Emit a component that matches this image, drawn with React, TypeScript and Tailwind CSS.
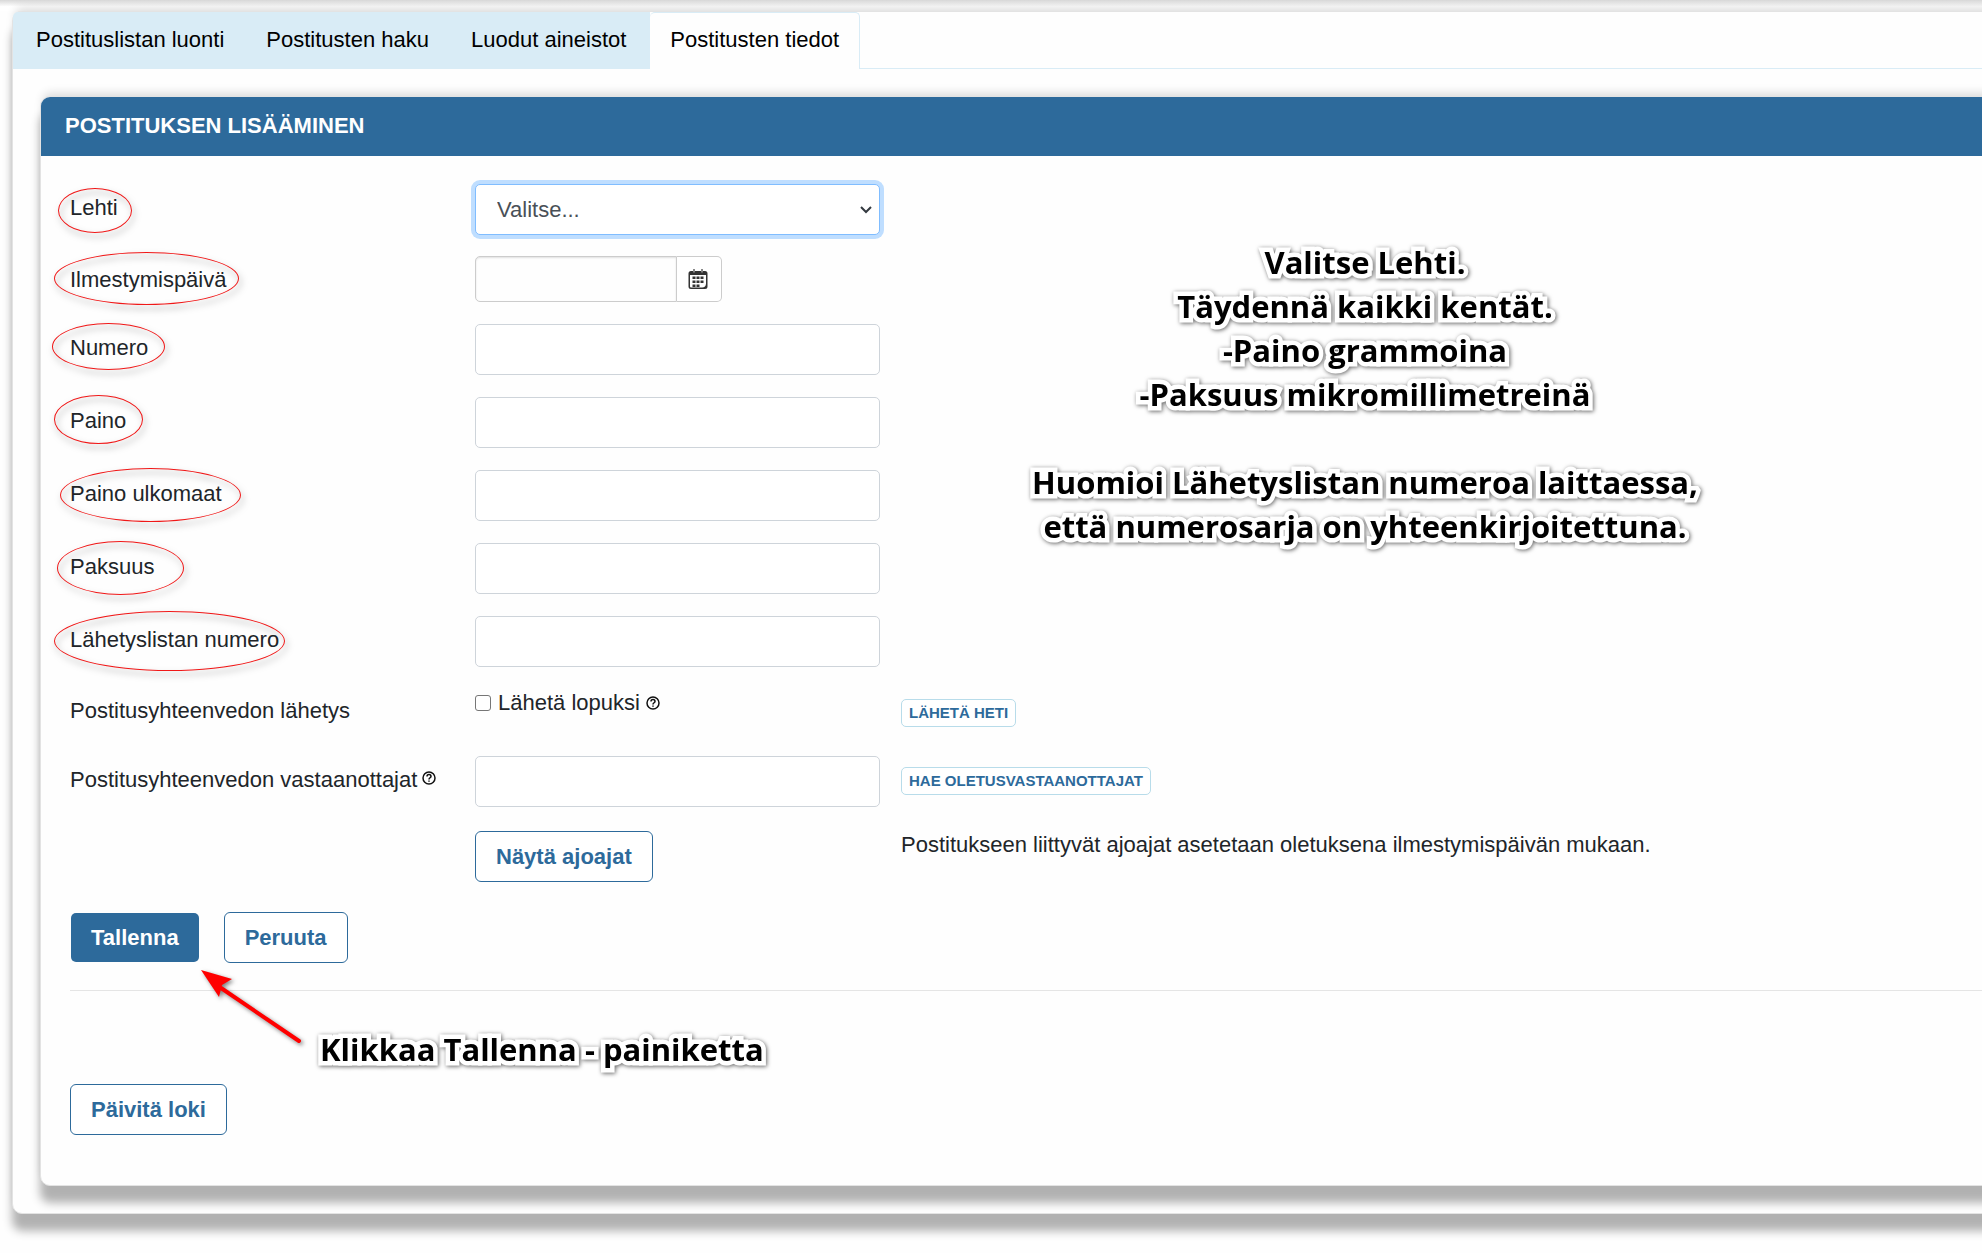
import React from "react";

const CARD_SHADOW =
  "border border-[#e3e3e3] rounded-[10px] shadow-[0_17px_10px_rgba(0,0,0,0.3),0_-6px_10px_-3px_rgba(0,0,0,0.14)]";

const FIELD =
  "h-[51px] w-full rounded-[5px] border border-[#ced4da] bg-white px-[21px] text-[#495057] outline-none";

const OUTLINE_BUTTON =
  "h-[51px] rounded-[6px] border border-[#2d6a9b] bg-white px-5 font-bold text-[#2d6a9b]";

const SMALL_BUTTON =
  "block h-7 rounded-[5px] border border-[#b8dcea] bg-white px-[7px] text-[15px] leading-5 font-bold text-[#2d6a9b]";

const CAPTION =
  "font-['Open_Sans',sans-serif] text-[31px] leading-[44px] font-bold text-black [paint-order:stroke_fill] [-webkit-text-stroke:9px_white] [filter:drop-shadow(1px_1px_2px_rgba(0,0,0,0.6))]";

function HelpIcon() {
  return (
    <svg viewBox="0 0 14 14" className="inline-block size-[14px] align-[2px]" fill="none" stroke="#111" strokeWidth="1.5" aria-hidden="true">
      <circle cx="7" cy="7" r="6" />
      <path d="M5 5.6C5 4.3 5.9 3.6 7 3.6s2 .7 2 1.8c0 1.2-2 1.5-2 3" />
      <path d="M7 9.4v1.4" />
    </svg>
  );
}

function CalendarIcon() {
  return (
    <svg viewBox="0 0 20 21" className="h-[21px] w-5" aria-hidden="true">
      <path d="M3 2h14a2.500 2.500 0 0 1 2.500 2.500V17.500A2.500 2.500 0 0 1 17 20H3A2.500 2.500 0 0 1 .5 17.500v-13A2.500 2.500 0 0 1 3 2Z" fill="#333" />
      <path d="M2 6h16v8.500c0 2.500-1.500 4-4 4H3a1 1 0 0 1-1-1Z" fill="#fff" />
      <path d="M5 0h2v3.500H5zM13 0h2v3.500h-2z" fill="#888" />
      <path d="M4.500 7.500h3v2.500h-3zM8.500 7.500h3v2.500h-3zM12.500 7.500h3v2.500h-3zM4.500 11.500h3V14h-3zM8.500 11.500h3V14h-3zM12.500 11.500h3V14h-3zM4.500 15.500h3V18h-3zM8.500 15.500h3V18h-3z" fill="#333" />
    </svg>
  );
}

type RowProps = {
  id: string;
  label: string;
  ring: string;
  height: string;
  children: React.ReactNode;
};

function Row({ id, label, ring, height, children }: RowProps) {
  return (
    <div className={`flex items-start ${height}`}>
      <div className="w-[405px] shrink-0 pt-2">
        <label htmlFor={id} className="relative inline-block leading-8">
          {label}
          <span
            aria-hidden="true"
            className={`pointer-events-none absolute rounded-[50%] border border-[#f01818] drop-shadow-[2px_4px_3px_rgba(0,0,0,0.5)] ${ring}`}
          />
        </label>
      </div>
      <div className="w-[405px] shrink-0">{children}</div>
    </div>
  );
}

const TEXT_ROWS = [
  { id: "numero", label: "Numero", ring: "-left-[18px] top-[-9px] h-[47px] w-[113px]" },
  { id: "paino", label: "Paino", ring: "-left-[16px] top-[-10px] h-[49px] w-[89px]" },
  { id: "ulkomaat", label: "Paino ulkomaat", ring: "-left-[10px] top-[-10px] h-[54px] w-[181px]" },
  { id: "paksuus", label: "Paksuus", ring: "-left-[13px] top-[-10px] h-[54px] w-[127px]" },
  { id: "lista", label: "Lähetyslistan numero", ring: "-left-[16px] top-[-13px] h-[60px] w-[231px]" },
];

export default function App() {
  return (
    <div className="min-h-screen overflow-hidden bg-[#fefefe] font-['Liberation_Sans',Arial,sans-serif] text-[22px] leading-8 text-[#212529]">
      <div className="h-[11px] bg-linear-to-b from-[#d8d8d8] to-white to-60%" />
      <main className={`-mr-6 ml-3 bg-[#fefefe] pb-[27px] ${CARD_SHADOW}`}>
        <nav className="flex h-[57px] border-b border-[#d9ecf6] text-black">
          <div className="flex rounded-tl-[5px] bg-[#d9ecf6] pl-0.5">
            <a href="#luonti" className="px-[21px] pt-3">Postituslistan luonti</a>
            <a href="#haku" className="px-[21px] pt-3">Postitusten haku</a>
            <a href="#aineistot" className="pr-6 pl-[21px] pt-3">Luodut aineistot</a>
          </div>
          <a href="#tiedot" aria-current="page" className="-mb-px rounded-t-[5px] border-t border-r border-[#d9ecf6] bg-[#fefefe] px-5 pt-[11px]">
            Postitusten tiedot
          </a>
        </nav>

        <section className={`mt-[27px] ml-[27px] bg-[#fefefe] ${CARD_SHADOW}`}>
          <h1 className="h-[59px] rounded-t-[9px] bg-[#2d6a9b] px-6 leading-[57px] font-bold text-white">
            POSTITUKSEN LISÄÄMINEN
          </h1>

          <form className="relative pt-7 pb-[50px] pl-[29px]" onSubmit={(e) => e.preventDefault()}>
            <Row id="lehti" label="Lehti" height="h-[72px]" ring="-left-[12px] top-[-4px] h-[45px] w-[74px]">
              <div className="relative">
                <select id="lehti" className="h-[51px] w-full appearance-none rounded-[5px] border border-[#80bdff] bg-white px-[21px] text-[#495057] shadow-[0_0_0_4px_#bfdeff] outline-none">
                  <option>Valitse...</option>
                </select>
                <svg viewBox="0 0 12 8" className="pointer-events-none absolute top-[22px] right-2 h-2 w-3" fill="none" stroke="#343a40" strokeWidth="2" aria-hidden="true">
                  <path d="M1 1l5 5 5-5" />
                </svg>
              </div>
            </Row>

            <Row id="paiva" label="Ilmestymispäivä" height="h-[68px]" ring="-left-[16px] top-[-12px] h-[53px] w-[185px]">
              <div className="flex">
                <input id="paiva" type="text" className="h-[46px] w-[202px] rounded-l-[5px] border border-[#ccc] px-3 shadow-[inset_0_1px_2px_rgba(0,0,0,0.12)] outline-none" />
                <button type="button" aria-label="Valitse päivä" className="flex h-[46px] w-[45px] items-center justify-center rounded-r-[5px] border border-l-0 border-[#ccc] bg-white pr-0.5">
                  <CalendarIcon />
                </button>
              </div>
            </Row>

            {TEXT_ROWS.map((r) => (
              <Row key={r.id} {...r} height="h-[73px]">
                <input id={r.id} type="text" className={FIELD} />
              </Row>
            ))}

            <div className="flex h-[67px] items-start">
              <div className="w-[405px] shrink-0 pt-[6px]">Postitusyhteenvedon lähetys</div>
              <div className="-mt-0.5 flex w-[426px] shrink-0 items-center">
                <input id="lopuksi" type="checkbox" className="mr-[7px] size-4 appearance-none rounded-[3px] border border-[#767676] bg-white" />
                <label htmlFor="lopuksi" className="mr-[6px]">Lähetä lopuksi</label>
                <HelpIcon />
              </div>
              <button type="button" className={`mt-[10px] ${SMALL_BUTTON}`}>LÄHETÄ HETI</button>
            </div>

            <div className="flex h-[75px] items-start">
              <div className="w-[405px] shrink-0 pt-2 whitespace-nowrap">
                <label htmlFor="vastaanottajat" className="mr-[5px]">Postitusyhteenvedon vastaanottajat</label>
                <HelpIcon />
              </div>
              <div className="w-[405px] shrink-0">
                <input id="vastaanottajat" type="text" className={FIELD} />
              </div>
              <button type="button" className={`mt-[11px] ml-[21px] ${SMALL_BUTTON}`}>HAE OLETUSVASTAANOTTAJAT</button>
            </div>

            <div className="flex h-[81px] items-start">
              <div className="ml-[405px] w-[426px] shrink-0">
                <button type="button" className={OUTLINE_BUTTON}>Näytä ajoajat</button>
              </div>
              <p className="-mt-0.5">Postitukseen liittyvät ajoajat asetetaan oletuksena ilmestymispäivän mukaan.</p>
            </div>

            <div className="flex items-center gap-[25px]">
              <button type="submit" className="ml-px h-[49px] rounded-[5px] bg-[#2d6a9b] px-5 font-bold text-white">Tallenna</button>
              <button type="button" className={OUTLINE_BUTTON}>Peruuta</button>
            </div>

            <hr className="mt-[27px] border-[#e5e5e5]" />

            <button type="button" className={`mt-[93px] ${OUTLINE_BUTTON}`}>Päivitä loki</button>

            <div className={`absolute top-[84px] left-[974px] w-[700px] text-center ${CAPTION}`}>
              <p>Valitse Lehti.</p>
              <p>Täydennä kaikki kentät.</p>
              <p>-Paino grammoina</p>
              <p>-Paksuus mikromillimetreinä</p>
              <p className="mt-11">Huomioi Lähetyslistan numeroa laittaessa,</p>
              <p>että numerosarja on yhteenkirjoitettuna.</p>
            </div>

            <svg viewBox="0 0 110 84" className="absolute top-[810px] left-[156px] h-[84px] w-[110px] drop-shadow-[2px_2px_2px_rgba(0,0,0,0.5)]" aria-hidden="true">
              <path d="M24 22L102 75" stroke="#f00" strokeWidth="4" strokeLinecap="round" />
              <path d="M4 4L35 13L25 19L22 31Z" fill="#f00" />
            </svg>
            <p className={`absolute top-[871px] left-[279px] whitespace-nowrap ${CAPTION}`}>Klikkaa Tallenna - painiketta</p>
          </form>
        </section>
      </main>
    </div>
  );
}
